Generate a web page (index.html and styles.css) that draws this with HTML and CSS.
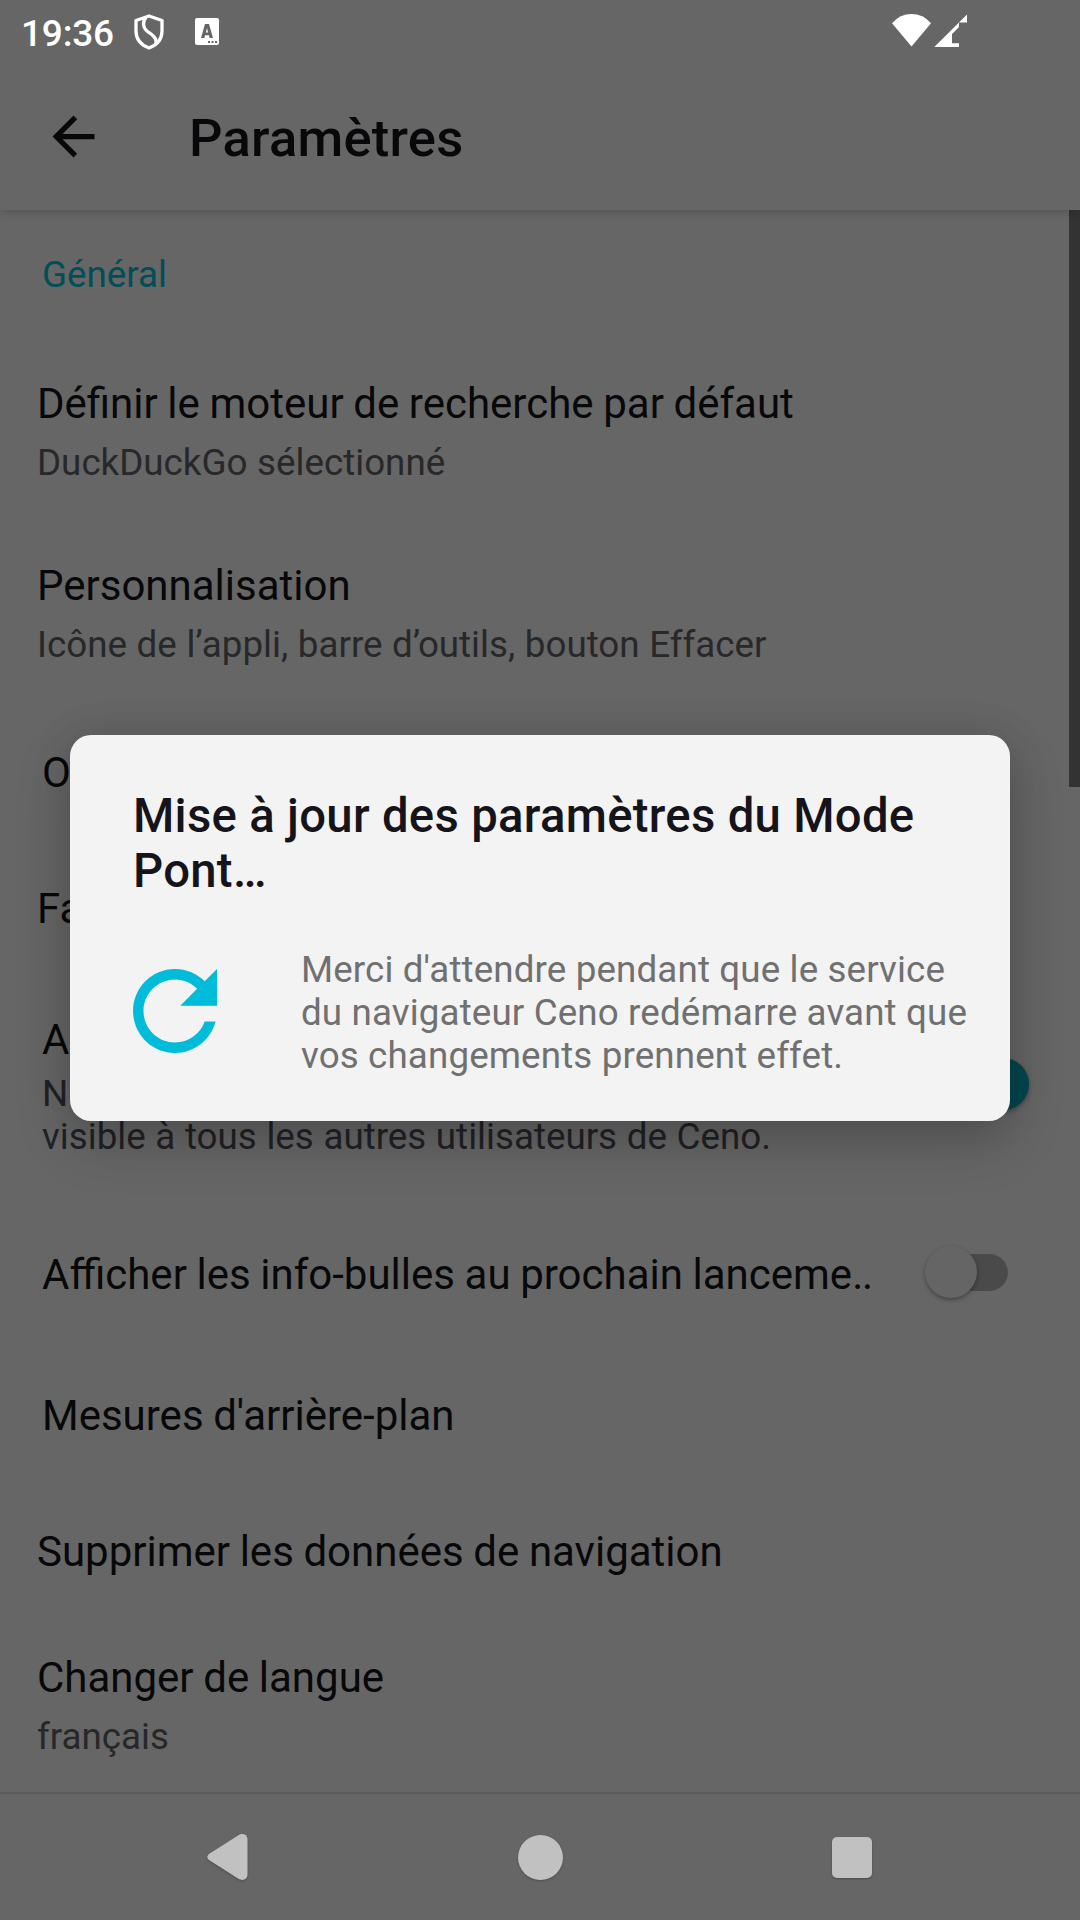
FILE: index.html
```html
<!DOCTYPE html>
<html lang="fr">
<head>
<meta charset="utf-8">
<title>Paramètres</title>
<link rel="stylesheet" href="styles.css">
</head>
<body>
<div class="screen">
  <div class="status">
    <span class="clock">19:36</span>
    <svg class="shield" width="30" height="36" viewBox="0 0 30 36" fill="none" stroke="#fff" stroke-width="3.300" stroke-linejoin="round"><path d="M15 2 28 6.500V17C28 25 23 31 15 34 7 31 2 25 2 17V6.500Z"/><path d="M12 3.500C8 8 9 14 13.500 17.500 18.500 21 23 24 22 29"/></svg>
    <svg class="keyboard" width="24" height="27" viewBox="0 0 24 27"><path fill="#fff" fill-rule="evenodd" d="M2 0H22Q24 0 24 2V25Q24 27 22 27H2Q0 27 0 25V2Q0 0 2 0ZM10 6H14L18 20H14.600L14 17.300H10L9.400 20H6ZM12 10 10.900 14.500H13.100ZM13 23V25H15V23ZM16.500 23V25H18.500V23ZM20 23V25H22V23Z"/></svg>
    <svg class="signals" width="75" height="33" viewBox="0 0 75 33" fill="#fff"><path d="M0 9.200Q8 0 19.500 0T39 9.200L19.500 32.500Z"/><path d="M42.300 33 75 .500V8.500H67V13L60 20V29.300H67V33Z"/></svg>
  </div>
  <header class="bar">
    <svg class="back" width="63" height="63" viewBox="0 0 24 24"><path d="M20 11H7.830l5.590-5.590L12 4l-8 8 8 8 1.410-1.410L7.830 13H20v-2z"/></svg>
    <h1 class="bar-title">Paramètres</h1>
  </header>
  <main class="list">
    <h2 class="category">Général</h2>
    <section class="row"><p class="label">Définir le moteur de recherche par défaut</p><p class="summary">DuckDuckGo sélectionné</p></section>
    <section class="row"><p class="label">Personnalisation</p><p class="summary">Icône de l’appli, barre d’outils, bouton Effacer</p></section>
    <section class="row row-single indent"><p class="label">O</p></section>
    <section class="row row-single"><p class="label">Fa</p></section>
    <section class="row row-switch row-bridge indent">
      <div><p class="label">A</p><p class="summary tight">No<br>visible à tous les autres utilisateurs de Ceno.</p></div>
      <span class="switch on"></span>
    </section>
    <section class="row row-switch row-tips indent"><p class="label">Afficher les info-bulles au prochain lanceme<span class="dots">..</span></p><span class="switch"></span></section>
    <section class="row row-single indent"><p class="label">Mesures d'arrière-plan</p></section>
    <section class="row row-single"><p class="label">Supprimer les données de navigation</p></section>
    <section class="row row-language"><p class="label">Changer de langue</p><p class="summary">français</p></section>
    <span class="scrollbar"></span>
  </main>
  <nav class="nav">
    <svg class="nav-back" width="41" height="46" viewBox="0 0 41 46"><path d="M2 20 31 1.500C36-1.500 40 .500 40.500 5V41C40 45.500 36 47.500 31 44.500L2 26Q-1.500 23 2 20Z"/></svg>
    <svg width="45" height="45" viewBox="0 0 45 45"><circle cx="22.500" cy="22.500" r="22.500"/></svg>
    <svg class="nav-recent" width="40" height="41" viewBox="0 0 40 41"><rect width="40" height="41" rx="5"/></svg>
  </nav>
  <div class="dialog" role="dialog">
    <h2 class="dialog-title">Mise à jour des paramètres du Mode Pont…</h2>
    <div class="dialog-body">
      <svg width="84" height="84" viewBox="4 4 16 16"><path d="M17.650 6.350C16.200 4.900 14.210 4 12 4c-4.420 0-7.990 3.580-7.990 8s3.570 8 7.990 8c3.730 0 6.840-2.550 7.730-6h-2.080c-.82 2.330-3.040 4-5.650 4-3.310 0-6-2.690-6-6s2.690-6 6-6c1.660 0 3.140.69 4.220 1.780L13 11h7V4l-2.350 2.350z"/></svg>
      <p class="message">Merci d'attendre pendant que le service<br>du navigateur Ceno redémarre avant que<br>vos changements prennent effet.</p>
    </div>
  </div>
</div>
</body>
</html>
```
FILE: styles.css
```css
* { box-sizing: border-box; margin: 0; padding: 0; }
body { width: 1080px; height: 1920px; font-family: Roboto, sans-serif; background: #666; }
svg { display: block; flex: none; }
.screen { position: relative; width: 1080px; height: 1920px; display: flex; flex-direction: column; overflow: hidden; background: #666; color: #08080a; }

.status { height: 63px; display: flex; align-items: flex-start; padding: 11px 113px 0 21px; background: #666; color: #fff; z-index: 2; }
.clock { width: 113px; padding-top: 1px; font-size: 37px; line-height: 44px; font-weight: 500; letter-spacing: -.2px; }
.shield { margin-top: 3px; }
.keyboard { margin: 7px 0 0 31px; }
.signals { margin: 3px 0 0 auto; }

.bar { height: 147px; display: flex; align-items: center; padding-left: 42px; background: #666; box-shadow: 0 3px 8px rgba(0, 0, 0, .16); z-index: 1; }
.back { fill: #08080a; }
.bar-title { margin-left: 84px; padding-top: 2px; font-size: 52.500px; line-height: 62px; font-weight: 500; letter-spacing: .25px; }

.list { position: relative; height: 1582px; }
.category { height: 131px; padding: 43px 42px 0; font-size: 36.750px; line-height: 43px; font-weight: 400; color: #004e57; }
.row { padding: 38px 37px 39px; }
.indent { padding-left: 42px; }
.label { font-size: 42px; line-height: 50px; white-space: nowrap; word-spacing: -.8px; }
.dots { letter-spacing: -1.300px; }
.summary { margin-top: 12px; font-size: 36.750px; line-height: 43px; color: #28282a; white-space: nowrap; word-spacing: .5px; }
.tight { margin-top: 7px; color: #212126; }
.row-single { height: 136px; padding-top: 43px; }
.row-switch { display: flex; justify-content: space-between; }
.row-bridge { height: 219px; padding-right: 51px; }
.row-tips { height: 152px; padding: 54px 72px 0 42px; }
.row-language { padding: 33px 37px 0; }

.switch { display: flex; align-items: center; width: 83px; height: 52px; margin-top: 43px; }
.switch::before { content: ""; width: 52px; height: 52px; border-radius: 50%; background: #656565; box-shadow: 0 2px 4px rgba(0, 0, 0, .35); z-index: 1; }
.switch::after { content: ""; width: 72px; height: 37px; margin-left: -41px; border-radius: 19px; background: #4a4a4a; }
.switch.on { flex-direction: row-reverse; }
.switch.on::before { background: #00464e; }
.switch.on::after { margin: 0 -41px 0 0; background: #2b4f53; }
.row-tips .switch { margin-top: -4px; }

.scrollbar { position: absolute; top: 0; right: 0; width: 11px; height: 577px; background: #333; }

.nav { height: 128px; display: grid; grid-template-columns: 311px 311px 311px; justify-content: center; justify-items: center; align-items: center; border-top: 2px solid #5b5b5b; }
.nav svg { fill: #c1c1c1; filter: drop-shadow(0 1px 1px rgba(0, 0, 0, .25)); overflow: visible; }
.nav-back { margin-right: 3px; }
.nav-recent { margin-left: 1px; }

.dialog { position: absolute; left: 70px; top: 735px; width: 940px; height: 386px; padding: 54px 32px 0 63px; border-radius: 21px; background: #f3f3f3; box-shadow: 0 20px 55px rgba(0, 0, 0, .2), 0 0 40px rgba(0, 0, 0, .1); z-index: 3; }
.dialog-title { font-size: 47.250px; line-height: 55px; font-weight: 500; letter-spacing: .3px; color: #15141a; }
.dialog-body { display: flex; gap: 84px; align-items: center; margin-top: 49px; }
.dialog-body svg { fill: #00bcd9; margin-top: -4px; }
.message { font-size: 36.750px; line-height: 43px; letter-spacing: .13px; color: #707070; white-space: nowrap; }
```
